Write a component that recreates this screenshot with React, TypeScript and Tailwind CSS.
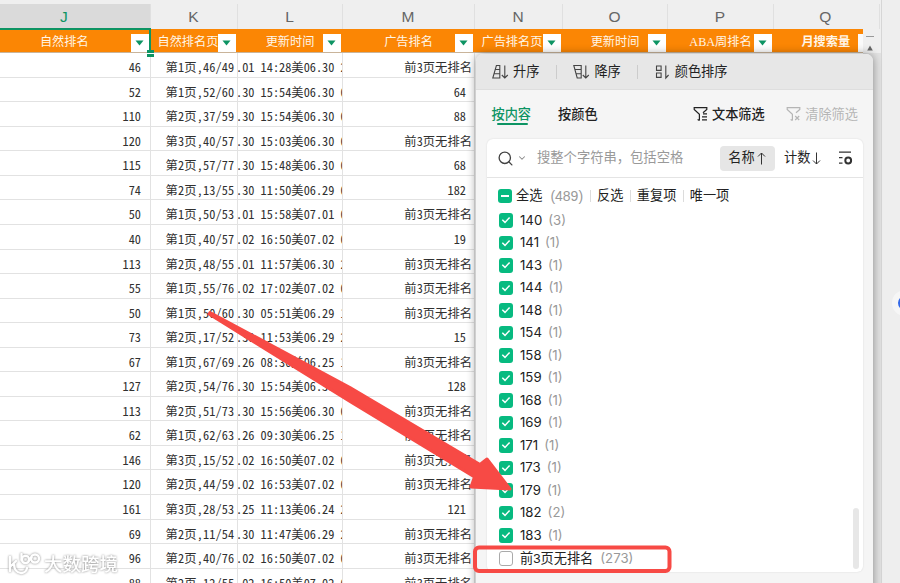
import { clsx } from 'clsx'
import { Search, ChevronDown } from 'lucide-react'

const NO_RANK = '前3页无排名'

const columns = [
  { letter: 'J', title: '自然排名', width: 'w-[150.5px]', shift: 'pr-[22px]' },
  { letter: 'K', title: '自然排名页', width: 'w-[87px]', shift: '', tight: true },
  { letter: 'L', title: '更新时间', width: 'w-[105px]', shift: '' },
  { letter: 'M', title: '广告排名', width: 'w-[132px]', shift: '' },
  { letter: 'N', title: '广告排名页', width: 'w-[88px]', shift: '', tight: true },
  { letter: 'O', title: '更新时间', width: 'w-[105px]', shift: '' },
  { letter: 'P', title: 'ABA周排名', width: 'w-[106px]', shift: '' },
  { letter: 'Q', title: '月搜索量', width: 'w-[106.5px]', shift: 'pr-[2px]', bold: true },
]

const rows = [
  ['46', '第1页,46/49', '.01 14:28美06.30 2', NO_RANK],
  ['52', '第1页,52/60', '.30 15:54美06.30 0', '64'],
  ['110', '第2页,37/59', '.30 15:54美06.30 0', '88'],
  ['120', '第3页,40/57', '.30 15:03美06.30 0', NO_RANK],
  ['115', '第2页,57/77', '.30 15:48美06.30 0', '68'],
  ['74', '第2页,13/55', '.30 11:50美06.29 0', '182'],
  ['50', '第1页,50/53', '.01 15:58美07.01 0', NO_RANK],
  ['40', '第1页,40/57', '.02 16:50美07.02 0', '19'],
  ['113', '第2页,48/55', '.01 11:57美06.30 2', NO_RANK],
  ['55', '第1页,55/76', '.02 17:02美07.02 0', NO_RANK],
  ['50', '第1页,50/60', '.30 05:51美06.29 1', NO_RANK],
  ['73', '第2页,17/52', '.30 11:53美06.29 2', '15'],
  ['67', '第1页,67/69', '.26 08:30美06.25 1', NO_RANK],
  ['127', '第2页,54/76', '.30 15:54美06.30 0', '128'],
  ['113', '第2页,51/73', '.30 15:56美06.30 0', NO_RANK],
  ['62', '第1页,62/63', '.26 09:30美06.25 1', NO_RANK],
  ['146', '第3页,15/52', '.02 16:50美07.02 0', NO_RANK],
  ['120', '第2页,44/59', '.02 16:53美07.02 0', NO_RANK],
  ['161', '第3页,28/53', '.25 11:13美06.24 2', '121'],
  ['69', '第2页,11/54', '.30 11:47美06.29 2', NO_RANK],
  ['96', '第2页,40/76', '.02 16:50美07.02 0', NO_RANK],
  ['88', '第2页,12/55', '.02 16:50美07.02 0', NO_RANK],
]

const options = [
  ['140', 3],
  ['141', 1],
  ['143', 1],
  ['144', 1],
  ['148', 1],
  ['154', 1],
  ['158', 1],
  ['159', 1],
  ['168', 1],
  ['169', 1],
  ['171', 1],
  ['173', 1],
  ['179', 1],
  ['182', 2],
  ['183', 1],
] as const

function FilterButton() {
  return (
    <span className="absolute right-[1.5px] top-[4.5px] flex h-[19px] w-[18.5px] items-center justify-center bg-white">
      <svg width="9" height="6" viewBox="0 0 9 6">
        <path d="M0.5 0.5h8L4.5 5.5z" fill="#0d9463" />
      </svg>
    </span>
  )
}

function Sheet() {
  return (
    <div className="h-full w-[881px] shrink-0 overflow-hidden bg-white">
      <div className="h-[4px] bg-[#efefef]" />
      <div className="flex h-[25px] bg-[#efefef] font-['Liberation_Sans',sans-serif] text-[15.5px]">
        {columns.map((col) => (
          <div
            key={col.letter}
            className={clsx(
              'flex shrink-0 items-center justify-center border-r border-[#e0e0e0]',
              col.width,
              col.shift,
              col.letter === 'J' ? 'bg-[#dadada] text-[#0d9463]' : 'text-[#666]',
            )}
          >
            {col.letter}
          </div>
        ))}
      </div>
      <div className="flex h-[24.15px]">
        <div className="flex w-[863px] overflow-hidden border-b border-[#c9b49a] bg-[#fb8604]">
          {columns.map((col) => (
            <div
              key={col.letter}
              className={clsx('relative flex shrink-0 items-center', col.tight ? 'justify-start pl-[7px]' : 'justify-center', col.width, col.shift)}
            >
              <span
                className={clsx(
                  'whitespace-nowrap pt-[3px] font-["Liberation_Serif","Noto_Sans_CJK_SC",serif] text-[12.2px] leading-4 text-[#fff6e8]',
                  col.bold && 'font-semibold',
                )}
              >
                {col.title}
              </span>
              {col.letter === 'Q' ? <span className="absolute left-[84px] top-[4.5px] h-[19px] w-[10px] bg-[#fafafa]" /> : <FilterButton />}
            </div>
          ))}
        </div>
        <div className="flex flex-1 flex-col items-center gap-2 bg-[#efefef] pt-[7px]">
          <div className="mr-1 h-px w-2 bg-[#999]" />
          <svg width="6" height="6" viewBox="0 0 6 6" className="mr-1">
            <path d="M3 0.5L5.8 5.5H0.2z" fill="#666" />
          </svg>
        </div>
      </div>
      <div className="flex">
        <div className="w-[863px] shrink-0 text-[12.3px] text-[#303030] [font-feature-settings:'hwid']">
          {rows.map(([rank, page, time, ad], i) => (
            <div key={i} className="flex h-[24.55px] whitespace-nowrap leading-[28px]">
              <div className="w-[150.5px] shrink-0 border-b border-r border-[#e2e2e2] pr-[8.5px] text-right">{rank}</div>
              <div className="w-[87px] shrink-0 border-b border-r border-[#e2e2e2] pl-[15px] tracking-[0.13px]">{page}</div>
              <div className="w-[105px] shrink-0 overflow-hidden border-b border-r border-[#e2e2e2]">
                <span className="-ml-[1.5px]">{time}</span>
              </div>
              <div
                className={clsx(
                  'w-[132px] shrink-0 border-b border-r border-[#e2e2e2] text-right',
                  ad === NO_RANK ? 'pr-[1.5px]' : 'pr-[7.5px]',
                )}
              >
                {ad}
              </div>
            </div>
          ))}
        </div>
        <div className="flex-1 bg-[#e2e2e2]" />
      </div>
    </div>
  )
}

function SortArrow({ kind }: { kind: 'asc' | 'desc' | 'color' }) {
  return (
    <svg width="18" height="16" viewBox="0 0 18 16" fill="none" stroke="#444" strokeWidth="1.1">
      {kind === 'asc' && <path d="M4.4 1.5h3.4v12.5H0.8zM3.4 5.5h4.4M2.2 9.8h5.6" />}
      {kind === 'desc' && <path d="M0.8 1.5h7.4V14H4.2zM1.9 5.5h6.3M3 9.8h5.2" />}
      {kind === 'color' && <path d="M1.5 2h4.6v4.4H1.5zM1.5 9h4.6v4.4H1.5z" />}
      <path d={kind === 'color' ? 'M10.8 1.5V14l2.8-3' : 'M12.8 1.5V14M9.8 11l3 3 3-3'} />
    </svg>
  )
}

function FunnelIcon({ clear = false }: { clear?: boolean }) {
  return (
    <svg width="16" height="16" viewBox="0 0 16 16" fill="none" stroke="currentColor" strokeWidth="1.2">
      <path d="M6.4 14.5V8.3L1.2 3.4V1.6h12.6v1.8L10 6.8M6.4 14.5l-1.8-1" />
      {clear ? <path d="M9.2 10l4 4M13.2 10l-4 4" /> : <path d="M10 7.8h4M9 10.8h5M9 13.8h5" />}
    </svg>
  )
}

function Check() {
  return (
    <span className="flex size-[14.5px] shrink-0 items-center justify-center rounded-[3px] bg-[#07ba80]">
      <svg width="10" height="8" viewBox="0 0 10 8" fill="none" stroke="white" strokeWidth="1.5">
        <path d="M1.3 3.8L4 6.4l4.6-5" />
      </svg>
    </span>
  )
}

function Divider() {
  return <span className="h-[12px] w-px bg-[#dcdcdc]" />
}

function FilterPanel() {
  return (
    <div className="absolute left-[476px] top-[54px] flex h-[540px] w-[397px] flex-col overflow-hidden rounded-t-[7px] bg-[#f5f5f5] text-[13.2px] text-[#222] shadow-[0_0_10px_rgba(0,0,0,0.4)]">
      <div className="flex h-[36px] shrink-0 items-center border-b border-[#dedede] bg-[#e7e7e7] pl-[16px]">
        <SortArrow kind="asc" />
        <span className="ml-[3px]">升序</span>
        <span className="ml-[17px] h-[14px] w-px bg-[#ccc]" />
        <span className="ml-[16px] flex">
          <SortArrow kind="desc" />
        </span>
        <span className="ml-[3px]">降序</span>
        <span className="ml-[16px] h-[14px] w-px bg-[#ccc]" />
        <span className="ml-[17px] flex">
          <SortArrow kind="color" />
        </span>
        <span className="ml-[2px]">颜色排序</span>
      </div>

      <div className="flex h-[49px] shrink-0 items-center pl-[15.5px] pr-[15px] font-medium">
        <div className="relative text-[#0d9463]">
          按内容
          <span className="absolute -bottom-px left-[5px] h-[2px] w-[31px] rounded-full bg-[#0d9463]" />
        </div>
        <span className="ml-[27px]">按颜色</span>
        <span className="ml-auto flex items-center gap-[3.5px]">
          <FunnelIcon />
          文本筛选
        </span>
        <span className="ml-[21px] flex items-center gap-[3.5px] font-normal text-[#b5b5b5]">
          <FunnelIcon clear />
          清除筛选
        </span>
      </div>

      <div className="ml-[10.5px] flex h-[433px] w-[376.5px] shrink-0 flex-col rounded-[6px] bg-white shadow-[0_0_2px_rgba(0,0,0,0.12)]">
        <div className="flex h-[38.5px] shrink-0 items-center border-b border-[#e4e4e4] pl-[10px] pt-px">
          <Search size={17} strokeWidth={1.9} className="text-[#444]" />
          <ChevronDown size={10} strokeWidth={2.5} className="ml-[3px] text-[#888]" />
          <span className="ml-[10.5px] w-[182.500px] whitespace-nowrap text-[13.3px] text-[#999]">搜整个字符串，包括空格</span>
          <span className="flex h-[25px] w-[55px] items-center justify-center gap-[2px] rounded-[4px] bg-[#e6e6e6]">
            名称
            <svg width="9" height="13" viewBox="0 0 9 13" fill="none" stroke="#333">
              <path d="M4.5 12.5V1M1 4.5L4.5 1 8 4.5" />
            </svg>
          </span>
          <span className="ml-[9.5px] flex items-center gap-[2px]">
            计数
            <svg width="9" height="13" viewBox="0 0 9 13" fill="none" stroke="#333">
              <path d="M4.5 0.5V12M1 8.5L4.5 12 8 8.5" />
            </svg>
          </span>
          <svg className="ml-[17px]" width="15" height="14" viewBox="0 0 15 14" fill="none" stroke="#333" strokeWidth="1.2">
            <path d="M1 1.2h12M1 6.7h3.5M1 12.2h3.5" />
            <circle cx="10.2" cy="9.5" r="2.9" strokeWidth="2" />
          </svg>
        </div>

        <div className="relative flex flex-col pl-[12px] pt-[5.5px]">
          <div className="flex h-[26px] items-center">
            <span className="-ml-[0.5px] flex size-[14px] items-center justify-center rounded-[3px] bg-[#07ba80]">
              <span className="h-[2px] w-[8px] bg-white" />
            </span>
            <span className="ml-[4px]">全选</span>
            <span className="ml-[8px] w-[39.5px] font-['Liberation_Sans',sans-serif] text-[14px] text-[#999]">(489)</span>
            <span className="flex items-center gap-[6.200px]">
              <Divider />
              <span>反选</span>
              <Divider />
              <span>重复项</span>
              <Divider />
              <span>唯一项</span>
            </span>
          </div>
          {options.map(([value, count]) => (
            <div key={value} className="flex h-[22.5px] items-center font-['Inter',sans-serif] text-[13.2px]">
              <Check />
              <span className="ml-[7px] pt-px">{value}</span>
              <span className="ml-[6px] pt-px text-[#999]">({count})</span>
            </div>
          ))}
          <div className="flex h-[23.5px] items-center">
            <span className="size-[14.5px] rounded-[3px] border border-[#aaa] bg-white" />
            <span className="ml-[7px] pt-px">{NO_RANK}</span>
            <span className="ml-[7px] pt-px font-['Inter',sans-serif] text-[#999]">(273)</span>
          </div>
          <span className="absolute right-[4px] top-[330.5px] h-[61px] w-[6px] rounded-full bg-[#e7e7e7]" />
        </div>
      </div>
    </div>
  )
}

function Watermark() {
  return (
    <div className="absolute left-[8px] top-[553px] flex items-center gap-[3px] text-white [filter:drop-shadow(0_0_1px_#888)]">
      <svg width="33" height="24" viewBox="0 0 33 24" fill="none" stroke="white" strokeWidth="2.4" strokeLinecap="round">
        <path d="M2 4v14M3 13l5-5M6 12c1 10 12 10 13 3" />
        <circle cx="17.500" cy="6.500" r="3.600" />
        <circle cx="27" cy="5.500" r="4" />
        <path d="M13.500 1v6M21 7.500l2.500-3" />
      </svg>
      <span className="text-[18.5px] font-medium leading-6">大数跨境</span>
    </div>
  )
}

export default function App() {
  return (
    <div className="relative flex h-[583px] w-[900px] overflow-hidden bg-[#eee] font-['Liberation_Sans','Noto_Sans_CJK_SC',sans-serif]">
      <div className="h-full font-['Noto_Sans_CJK_SC',sans-serif]">
        <Sheet />
      </div>
      <div className="h-full flex-1 border-l border-[#d6d6d6] bg-[#eee]" />

      {/* selected cell frame and its fill handle */}
      <div className="absolute -left-1 top-[27.5px] h-[24px] w-[155px] border-2 border-b-0 border-[#0d9463]" />
      <div className="absolute left-[147px] top-[50px] flex h-[7px] w-[7px] flex-col justify-between bg-white">
        <span className="h-[3px] bg-[#0d9463]" />
        <span className="h-[3px] bg-[#0d9463]" />
      </div>

      <FilterPanel />
      <div className="absolute left-[892px] top-[290px] size-[26px] rounded-full border-[6px] border-[#f6f6f6] bg-[#3268e8]" />
      <Watermark />

      {/* callout */}
      <svg className="absolute left-0 top-0" width="900" height="583" viewBox="0 0 900 583">
        <path
          d="M210 312.500L350 387.500L480 464.500L487 459L510 489L471 487L474.500 477L350 401.500L209 314Z"
          fill="#f74a45"
          stroke="#f74a45"
          strokeWidth="3"
          strokeLinejoin="round"
        />
        <rect x="475" y="547.5" width="194.500" height="23.500" rx="4" fill="none" stroke="#f74a45" strokeWidth="4" />
      </svg>
    </div>
  )
}
